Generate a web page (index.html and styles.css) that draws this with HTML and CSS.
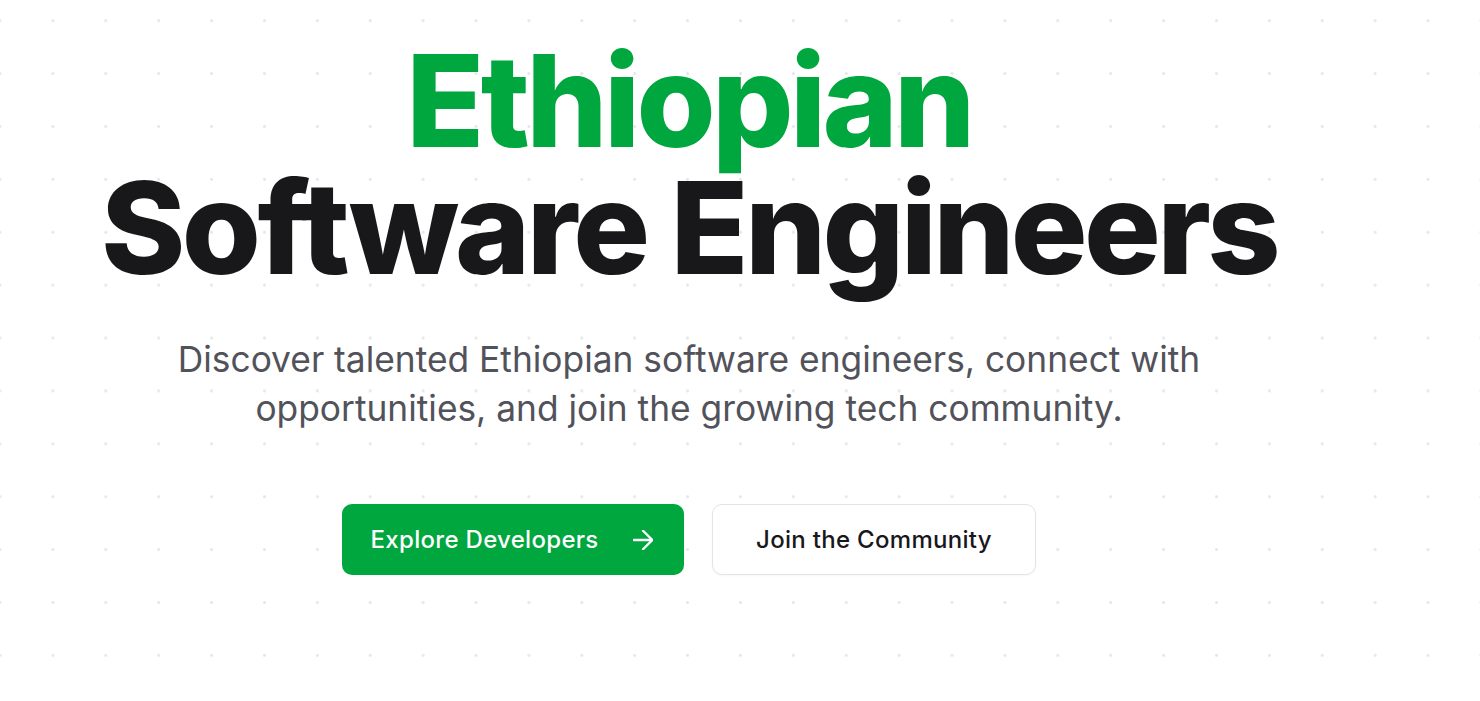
FILE: index.html
```html
<!DOCTYPE html>
<html lang="en">
<head>
<meta charset="utf-8">
<title>Ethiopian Software Engineers</title>
<link rel="stylesheet" href="styles.css">
</head>
<body>
<main class="page">
  <section class="hero">
    <h1 class="title">
      <span class="title-accent">Ethiopian</span>
      <span class="title-main">Software Engineers</span>
    </h1>
    <p class="lead">Discover talented Ethiopian software engineers, connect with opportunities, and join the growing tech community.</p>
    <div class="actions">
      <a class="btn btn-primary" href="#">
        <span>Explore Developers</span>
        <svg class="btn-icon" width="20" height="20" viewBox="5 5 14 14" fill="none" stroke="currentColor" stroke-width="1.6" stroke-linecap="round" stroke-linejoin="round" aria-hidden="true"><path d="M5.5 12h13"/><path d="M12 5.5l6.5 6.5-6.5 6.5"/></svg>
      </a>
      <a class="btn btn-secondary" href="#">Join the Community</a>
    </div>
  </section>
</main>
</body>
</html>
```

FILE: styles.css
```css
* { box-sizing: border-box; }

html, body {
  margin: 0;
  padding: 0;
}

body {
  font-family: Inter, "Noto Sans", "Liberation Sans", sans-serif;
  background-color: #ffffff;
  background-image: radial-gradient(circle at 1.5px 1.5px, #e6e6e8 1.1px, transparent 1.7px);
  background-size: 52.9px 52.9px;
  background-position: -1.5px 19.2px;
  min-height: 701px;
  overflow: hidden;
}

.page {
  width: 1378px;
}

.hero {
  display: flex;
  flex-direction: column;
  align-items: center;
  padding-top: 37px;
}

.title {
  margin: 0;
  display: flex;
  flex-direction: column;
  align-items: center;
  font-size: 128px;
  line-height: 127px;
  font-weight: 800;
  letter-spacing: -3.7px;
}

.title-accent {
  color: #00a63e;
}

.title-main {
  color: #18181b;
}

.lead {
  margin: 44px 0 0;
  width: 1080px;
  text-align: center;
  font-size: 35.35px;
  line-height: 49px;
  color: #52525b;
  font-weight: 400;
}

.actions {
  margin-top: 71px;
  display: flex;
  gap: 28px;
}

.btn {
  height: 71px;
  display: inline-flex;
  align-items: center;
  border-radius: 10px;
  font-size: 24px;
  font-weight: 500;
  letter-spacing: 0.3px;
  text-decoration: none;
}

.btn-primary {
  background: #00a63e;
  color: #ffffff;
  padding: 0 31px 0 29px;
  gap: 34px;
}

.btn-icon {
  display: block;
}

.btn-secondary {
  background: #ffffff;
  color: #18181b;
  border: 1px solid #e4e4e7;
  padding: 0 43.5px;
  box-shadow: 0 1px 2px rgba(0, 0, 0, 0.04);
}
```
